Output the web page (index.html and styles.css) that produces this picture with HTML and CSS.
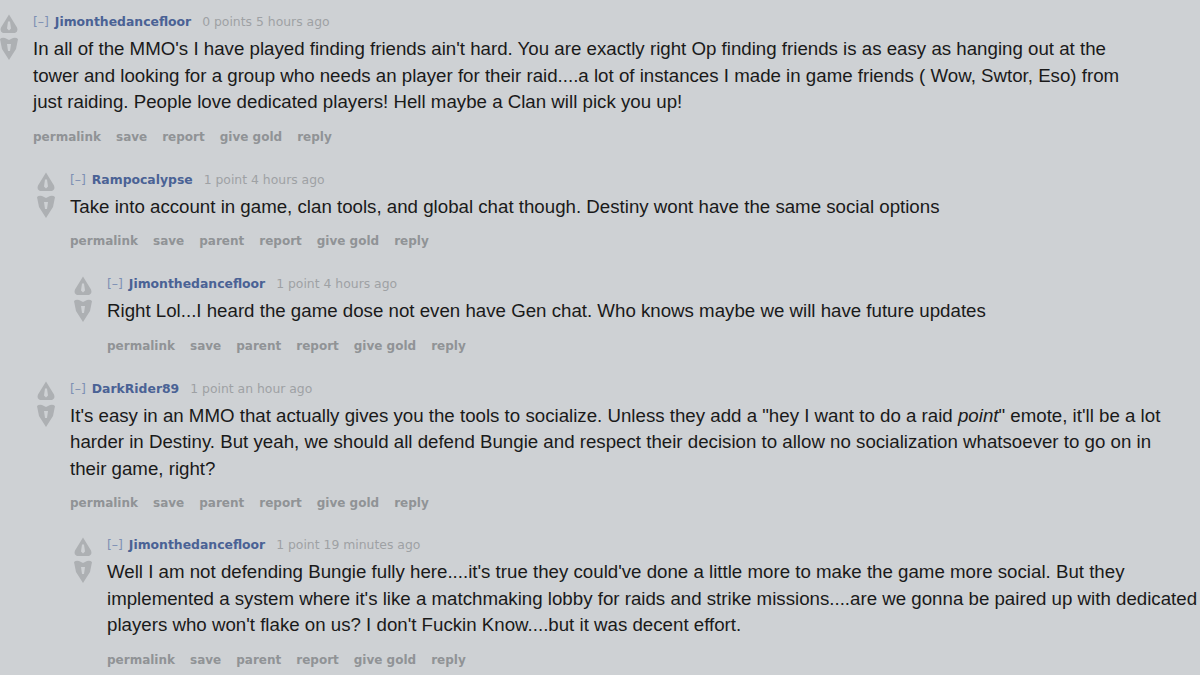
FILE: index.html
```html
<!DOCTYPE html>
<html>
<head>
<meta charset="utf-8">
<link rel="stylesheet" href="styles.css">
</head>
<body>
<div class="thread">
  <div class="comment">
    <div class="arrows">
      <svg class="up" viewBox="0 0 20 20"><path fill-rule="evenodd" d="M10 1 L18 14 Q19.5 18 16 19.5 L4 19.5 Q0.5 18 2 14 Z M9 8 L11 8 L12 15 L10 17 L8 15 Z"/></svg>
      <svg class="down" viewBox="0 0 20 24"><path fill-rule="evenodd" d="M1 2 Q3 0 6 1 L10 3 L14 1 Q17 0 19 2 L17 12 L10 23 L3 12 Z M8 7 L12 7 L11 14 L9 14 Z"/></svg>
    </div>
    <div class="entry">
      <div class="tagline"><span class="expand">[–]</span> <span class="author">Jimonthedancefloor</span> <span class="meta">0 points 5 hours ago</span></div>
      <div class="body">In all of the MMO's I have played finding friends ain't hard. You are exactly right Op finding friends is as easy as hanging out at the<br>tower and looking for a group who needs an player for their raid....a lot of instances I made in game friends ( Wow, Swtor, Eso) from<br>just raiding. People love dedicated players! Hell maybe a Clan will pick you up!</div>
      <ul class="buttons"><li>permalink</li><li>save</li><li>report</li><li>give gold</li><li>reply</li></ul>

      <div class="comment">
        <div class="arrows">
          <svg class="up" viewBox="0 0 20 20"><path fill-rule="evenodd" d="M10 1 L18 14 Q19.5 18 16 19.5 L4 19.5 Q0.5 18 2 14 Z M9 8 L11 8 L12 15 L10 17 L8 15 Z"/></svg>
          <svg class="down" viewBox="0 0 20 24"><path fill-rule="evenodd" d="M1 2 Q3 0 6 1 L10 3 L14 1 Q17 0 19 2 L17 12 L10 23 L3 12 Z M8 7 L12 7 L11 14 L9 14 Z"/></svg>
        </div>
        <div class="entry">
          <div class="tagline"><span class="expand">[–]</span> <span class="author">Rampocalypse</span> <span class="meta">1 point 4 hours ago</span></div>
          <div class="body">Take into account in game, clan tools, and global chat though. Destiny wont have the same social options</div>
          <ul class="buttons"><li>permalink</li><li>save</li><li>parent</li><li>report</li><li>give gold</li><li>reply</li></ul>

          <div class="comment">
            <div class="arrows">
              <svg class="up" viewBox="0 0 20 20"><path fill-rule="evenodd" d="M10 1 L18 14 Q19.5 18 16 19.5 L4 19.5 Q0.5 18 2 14 Z M9 8 L11 8 L12 15 L10 17 L8 15 Z"/></svg>
              <svg class="down" viewBox="0 0 20 24"><path fill-rule="evenodd" d="M1 2 Q3 0 6 1 L10 3 L14 1 Q17 0 19 2 L17 12 L10 23 L3 12 Z M8 7 L12 7 L11 14 L9 14 Z"/></svg>
            </div>
            <div class="entry">
              <div class="tagline"><span class="expand">[–]</span> <span class="author">Jimonthedancefloor</span> <span class="meta">1 point 4 hours ago</span></div>
              <div class="body">Right Lol...I heard the game dose not even have Gen chat. Who knows maybe we will have future updates</div>
              <ul class="buttons"><li>permalink</li><li>save</li><li>parent</li><li>report</li><li>give gold</li><li>reply</li></ul>
            </div>
          </div>
        </div>
      </div>

      <div class="comment">
        <div class="arrows">
          <svg class="up" viewBox="0 0 20 20"><path fill-rule="evenodd" d="M10 1 L18 14 Q19.5 18 16 19.5 L4 19.5 Q0.5 18 2 14 Z M9 8 L11 8 L12 15 L10 17 L8 15 Z"/></svg>
          <svg class="down" viewBox="0 0 20 24"><path fill-rule="evenodd" d="M1 2 Q3 0 6 1 L10 3 L14 1 Q17 0 19 2 L17 12 L10 23 L3 12 Z M8 7 L12 7 L11 14 L9 14 Z"/></svg>
        </div>
        <div class="entry">
          <div class="tagline"><span class="expand">[–]</span> <span class="author">DarkRider89</span> <span class="meta">1 point an hour ago</span></div>
          <div class="body">It's easy in an MMO that actually gives you the tools to socialize. Unless they add a "hey I want to do a raid <em>point</em>" emote, it'll be a lot<br>harder in Destiny. But yeah, we should all defend Bungie and respect their decision to allow no socialization whatsoever to go on in<br>their game, right?</div>
          <ul class="buttons"><li>permalink</li><li>save</li><li>parent</li><li>report</li><li>give gold</li><li>reply</li></ul>

          <div class="comment last">
            <div class="arrows">
              <svg class="up" viewBox="0 0 20 20"><path fill-rule="evenodd" d="M10 1 L18 14 Q19.5 18 16 19.5 L4 19.5 Q0.5 18 2 14 Z M9 8 L11 8 L12 15 L10 17 L8 15 Z"/></svg>
              <svg class="down" viewBox="0 0 20 24"><path fill-rule="evenodd" d="M1 2 Q3 0 6 1 L10 3 L14 1 Q17 0 19 2 L17 12 L10 23 L3 12 Z M8 7 L12 7 L11 14 L9 14 Z"/></svg>
            </div>
            <div class="entry">
              <div class="tagline"><span class="expand">[–]</span> <span class="author">Jimonthedancefloor</span> <span class="meta">1 point 19 minutes ago</span></div>
              <div class="body">Well I am not defending Bungie fully here....it's true they could've done a little more to make the game more social. But they<br>implemented a system where it's like a matchmaking lobby for raids and strike missions....are we gonna be paired up with dedicated<br>players who won't flake on us? I don't Fuckin Know....but it was decent effort.</div>
              <ul class="buttons"><li>permalink</li><li>save</li><li>parent</li><li>report</li><li>give gold</li><li>reply</li></ul>
            </div>
          </div>
        </div>
      </div>
    </div>
  </div>
</div>
</body>
</html>
```

FILE: styles.css
```css
html, body {
  margin: 0;
  padding: 0;
  background: #ced1d4;
  width: 1200px;
  height: 675px;
  overflow: hidden;
}

.thread {
  padding-top: 13px;
}

.comment {
  display: flex;
  align-items: flex-start;
}

.entry .comment {
  margin-left: 4px;
  margin-top: 25px;
}

.entry .comment.last {
  margin-top: 24px;
}

.arrows {
  width: 33px;
  flex: none;
  display: flex;
  flex-direction: column;
}

.arrows svg {
  width: 20px;
  margin-left: -1px;
  fill: #adb0b3;
}

.arrows .up {
  height: 21px;
}

.arrows .down {
  height: 24px;
  margin-top: 3px;
}

.entry {
  flex: 1;
  min-width: 0;
}

.tagline {
  font-family: "DejaVu Sans", Verdana, sans-serif;
  font-size: 12.4px;
  line-height: 18px;
  height: 18px;
  white-space: nowrap;
}

.expand {
  color: #7d8fb3;
}

.author {
  color: #4a6295;
  font-weight: bold;
  margin-left: 2px;
  margin-right: 7px;
}

.meta {
  color: #9ea1a4;
}

.body {
  font-family: "Liberation Sans", Arial, sans-serif;
  font-size: 18.7px;
  line-height: 26.5px;
  color: #1a1a1a;
  margin-top: 5px;
  white-space: nowrap;
}

.buttons {
  list-style: none;
  margin: 12px 0 0;
  padding: 0;
  display: flex;
  gap: 15px;
  font-family: "DejaVu Sans", Verdana, sans-serif;
  font-weight: bold;
  font-size: 12px;
  line-height: 18px;
  color: #909396;
}
```
